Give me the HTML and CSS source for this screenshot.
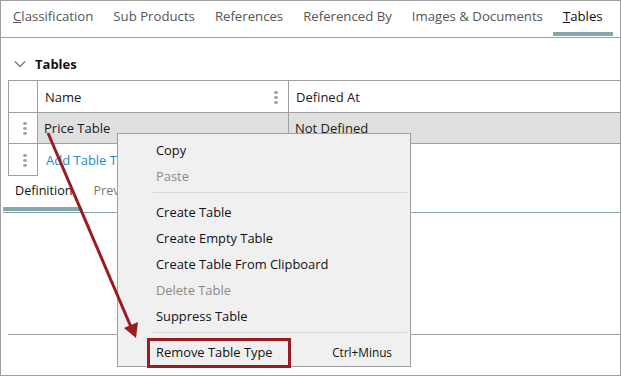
FILE: index.html
```html
<!DOCTYPE html>
<html lang="en">
<head>
  <meta charset="UTF-8" />
  <title>Tables</title>
  <link rel="stylesheet" href="styles.css">
</head>
<body>
  <div class="frame">
    <!-- Top tabs -->
    <nav class="tabs">
      <span class="tab"><u>C</u>lassification</span>
      <span class="tab">Sub Products</span>
      <span class="tab">References</span>
      <span class="tab">Referenced By</span>
      <span class="tab">Images &amp; Documents</span>
      <span class="tab active"><u>T</u>ables</span>
    </nav>

    <div class="section-head">
      <svg class="chevron" width="12" height="8" viewBox="0 0 12 8"><path d="M1 1.5 L6 6.5 L11 1.5" fill="none" stroke="#777" stroke-width="1.3"/></svg>
      <span>Tables</span>
    </div>

    <!-- Tables grid -->
    <div class="grid">
      <div class="cell handle"></div>
      <div class="cell head">Name <span class="dots"></span></div>
      <div class="cell head last">Defined At</div>

      <div class="cell handle"><span class="dots"></span></div>
      <div class="cell selected">Price Table</div>
      <div class="cell selected last">Not Defined</div>

      <div class="cell handle"><span class="dots"></span></div>
      <div class="cell add"><a href="#">Add Table Type</a></div>
      <div class="cell add last"></div>
    </div>

    <nav class="subtabs">
      <span class="subtab active">Definition</span>
      <span class="subtab">Preview</span>
    </nav>
    <div class="editor">
      <div class="editor-line"></div>
    </div>

    <!-- Context menu -->
    <div class="menu">
      <div class="item">Copy</div>
      <div class="item disabled">Paste</div>
      <div class="sep"></div>
      <div class="item">Create Table</div>
      <div class="item">Create Empty Table</div>
      <div class="item">Create Table From Clipboard</div>
      <div class="item disabled">Delete Table</div>
      <div class="item">Suppress Table</div>
      <div class="sep"></div>
      <div class="item">Remove Table Type <span class="shortcut">Ctrl+Minus</span></div>
    </div>

    <!-- Annotation -->
    <div class="callout"></div>
    <svg class="arrow" width="621" height="376" viewBox="0 0 621 376">
      <line x1="48" y1="133" x2="131" y2="327" stroke="#9b1b23" stroke-width="3"/>
      <polygon points="136,338 124,328 138,322" fill="#9b1b23"/>
    </svg>
  </div>
</body>
</html>
```

FILE: styles.css
```css
body {
  margin: 0;
  font-family: 'Open Sans', 'Noto Sans', sans-serif;
  font-size: 12.5px;
  color: #1a1a1a;
}
.frame {
  position: relative;
  width: 621px;
  height: 376px;
  box-sizing: border-box;
  border: 1px solid #a0a0a0;
  background: white;
  overflow: hidden;
}
/* Top tab strip */
.tabs {
  display: flex;
  height: 36px;
  padding-left: 2px;
  border-bottom: 1px solid #8fa5ab;
  font-size: 13.2px;
}
.tab {
  padding: 0 10px;
  line-height: 31px;
  color: #555;
  white-space: nowrap;
  border-bottom: 4px solid transparent;
  margin-bottom: 1px;
}
.tab.active {
  color: #111;
  border-bottom-color: #86a7ae;
}
/* Section header */
.section-head {
  display: flex;
  align-items: center;
  height: 26px;
  margin: 13px 0 3px;
  padding-left: 13px;
  font-weight: bold;
  font-size: 13px;
  color: #111;
}
.chevron {
  margin-right: 9px;
}
/* Grid */
.grid {
  display: grid;
  grid-template-columns: 30px 251px 1fr;
  grid-template-rows: 32px 31px 32px;
  margin-left: 7px;
  border-top: 1px solid #a0a0a0;
  font-size: 13px;
}
.cell {
  box-sizing: border-box;
  border-right: 1px solid #a0a0a0;
  border-bottom: 1px solid #a0a0a0;
  display: flex;
  align-items: center;
  padding-left: 6px;
  white-space: nowrap;
}
.cell.last {
  border-right: none;
}
.cell.handle {
  border-left: 1px solid #a0a0a0;
  justify-content: center;
  padding-left: 3px;
}
.cell.head {
  position: relative;
  padding-left: 7px;
}
.cell.selected {
  background: #e0e0e0;
}
.cell.add {
  border: none;
  padding-left: 8px;
}
.cell.add a {
  color: #1d8bd1;
  text-decoration: none;
}
.dots {
  width: 4px;
  height: 14px;
  background: radial-gradient(circle, #a9a9a9 1.6px, transparent 2px) 0 0 / 4px 5px repeat-y;
}
.cell.head .dots {
  position: absolute;
  right: 10px;
  top: 9px;
}
/* Sub tabs */
.subtabs {
  display: flex;
  height: 36px;
  margin-left: 2px;
  border-bottom: 1px solid #86a7ae;
  font-size: 12.6px;
}
.subtab {
  padding: 0 9px 0 12px;
  line-height: 29px;
  color: #777;
  border-bottom: 4px solid transparent;
  margin-bottom: 1px;
}
.subtab.active {
  color: #111;
  border-bottom-color: #86a7ae;
}
.editor {
  padding: 121px 0 0 7px;
}
.editor-line {
  height: 1px;
  background: #a0a0a0;
}
/* Context menu */
.menu {
  position: absolute;
  left: 116px;
  top: 132px;
  width: 294px;
  height: 234px;
  box-sizing: border-box;
  border: 1px solid #a0a0a0;
  background: #f0f0f0;
  padding-top: 3px;
  font-size: 12.9px;
}
.item {
  display: flex;
  justify-content: space-between;
  align-items: center;
  height: 26px;
  padding: 0 18px 0 38px;
  color: #111;
  white-space: nowrap;
}
.item.disabled {
  color: #8a8a8a;
}
.shortcut {
  font-size: 11.8px;
}
.sep {
  height: 1px;
  margin: 3px 3px 6px 35px;
  background: #d7d7d7;
}
/* Annotation overlay */
.callout {
  position: absolute;
  left: 146px;
  top: 337px;
  width: 144px;
  height: 30px;
  box-sizing: border-box;
  border: 3px solid #9b1b23;
}
.arrow {
  position: absolute;
  left: -1px;
  top: -1px;
  pointer-events: none;
}
```
